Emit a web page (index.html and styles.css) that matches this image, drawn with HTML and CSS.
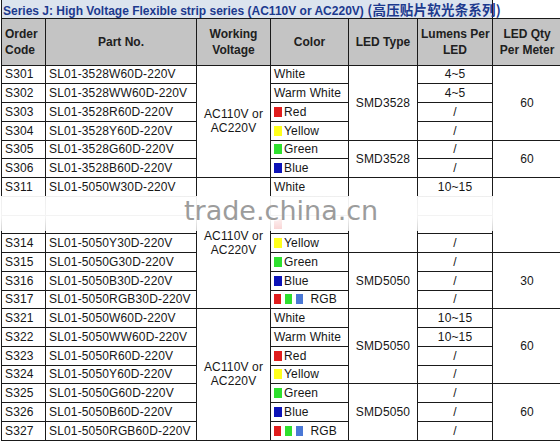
FILE: index.html
```html
<!DOCTYPE html>
<html>
<head>
<meta charset="utf-8">
<link rel="stylesheet" href="styles.css">
</head>
<body>
<div class="sheet">
<table class="spec">
  <colgroup>
    <col class="c1"><col class="c2"><col class="c3"><col class="c4"><col class="c5"><col class="c6"><col class="c7">
  </colgroup>
  <tr class="title">
    <td colspan="6" class="title-cell">Series J: High Voltage Flexible strip series (AC110V or AC220V) <span class="cjk">(高压贴片软光条系列)</span></td>
    <td class="title-blank"></td>
  </tr>
  <tr class="head">
    <th class="left">Order<br>Code</th>
    <th>Part No.</th>
    <th>Working<br>Voltage</th>
    <th>Color</th>
    <th>LED Type</th>
    <th>Lumens Per<br>LED</th>
    <th>LED Qty<br>Per Meter</th>
  </tr>

  <tr><td>S301</td><td>SL01-3528W60D-220V</td><td rowspan="6" class="ctr">AC110V or<br>AC220V</td><td>White</td><td rowspan="4" class="ctr">SMD3528</td><td class="ctr">4~5</td><td rowspan="4" class="ctr">60</td></tr>
  <tr><td>S302</td><td>SL01-3528WW60D-220V</td><td>Warm White</td><td class="ctr">4~5</td></tr>
  <tr><td>S303</td><td>SL01-3528R60D-220V</td><td><i class="sw red"></i>Red</td><td class="ctr">/</td></tr>
  <tr><td>S304</td><td>SL01-3528Y60D-220V</td><td><i class="sw yellow"></i>Yellow</td><td class="ctr">/</td></tr>
  <tr><td>S305</td><td>SL01-3528G60D-220V</td><td><i class="sw green"></i>Green</td><td rowspan="2" class="ctr">SMD3528</td><td class="ctr">/</td><td rowspan="2" class="ctr">60</td></tr>
  <tr><td>S306</td><td>SL01-3528B60D-220V</td><td><i class="sw blue"></i>Blue</td><td class="ctr">/</td></tr>

  <tr><td>S311</td><td>SL01-5050W30D-220V</td><td rowspan="7" class="ctr">AC110V or<br>AC220V</td><td>White</td><td rowspan="4" class="ctr"></td><td class="ctr">10~15</td><td rowspan="4" class="ctr"></td></tr>
  <tr><td></td><td></td><td></td><td class="ctr"></td></tr>
  <tr><td></td><td></td><td><i class="sw red"></i></td><td class="ctr"></td></tr>
  <tr><td>S314</td><td>SL01-5050Y30D-220V</td><td><i class="sw yellow"></i>Yellow</td><td class="ctr">/</td></tr>
  <tr><td>S315</td><td>SL01-5050G30D-220V</td><td><i class="sw green"></i>Green</td><td rowspan="3" class="ctr">SMD5050</td><td class="ctr">/</td><td rowspan="3" class="ctr">30</td></tr>
  <tr><td>S316</td><td>SL01-5050B30D-220V</td><td><i class="sw blue"></i>Blue</td><td class="ctr">/</td></tr>
  <tr><td>S317</td><td>SL01-5050RGB30D-220V</td><td><i class="sw red sm"></i><i class="sw green sm"></i><i class="sw lblue sm"></i> RGB</td><td class="ctr">/</td></tr>

  <tr><td>S321</td><td>SL01-5050W60D-220V</td><td rowspan="7" class="ctr">AC110V or<br>AC220V</td><td>White</td><td rowspan="4" class="ctr">SMD5050</td><td class="ctr">10~15</td><td rowspan="4" class="ctr">60</td></tr>
  <tr><td>S322</td><td>SL01-5050WW60D-220V</td><td>Warm White</td><td class="ctr">10~15</td></tr>
  <tr><td>S323</td><td>SL01-5050R60D-220V</td><td><i class="sw red"></i>Red</td><td class="ctr">/</td></tr>
  <tr><td>S324</td><td>SL01-5050Y60D-220V</td><td><i class="sw yellow"></i>Yellow</td><td class="ctr">/</td></tr>
  <tr><td>S325</td><td>SL01-5050G60D-220V</td><td><i class="sw green"></i>Green</td><td rowspan="3" class="ctr">SMD5050</td><td class="ctr">/</td><td rowspan="3" class="ctr">60</td></tr>
  <tr><td>S326</td><td>SL01-5050B60D-220V</td><td><i class="sw blue"></i>Blue</td><td class="ctr">/</td></tr>
  <tr><td>S327</td><td>SL01-5050RGB60D-220V</td><td><i class="sw red sm"></i><i class="sw green sm"></i><i class="sw lblue sm"></i> RGB</td><td class="ctr">/</td></tr>
</table>
<div class="watermark"><span class="wm-text">trade.china.cn</span></div>
</div>
</body>
</html>
```

FILE: styles.css
```css
html, body {
  margin: 0;
  padding: 0;
  background: #ffffff;
  overflow: hidden;
}
.sheet {
  position: relative;
  width: 560px;
  height: 442px;
  overflow: hidden;
}
.spec {
  border-collapse: collapse;
  table-layout: fixed;
  width: 560px;
  margin-left: 1px;
  font-family: "Liberation Sans", Arial, sans-serif;
  font-size: 12px;
  letter-spacing: 0.15px;
  color: #161616;
}
.c1 { width: 44px; }
.c2 { width: 151px; }
.c3 { width: 74px; }
.c4 { width: 78px; }
.c5 { width: 69px; }
.c6 { width: 75px; }
.c7 { width: 69px; }

.spec td, .spec th {
  border: 1px solid #1a1a1a;
  padding: 0 3px;
  line-height: 14px;
  white-space: nowrap;
  overflow: hidden;
  vertical-align: middle;
}
.spec tr { height: 18.75px; }
.spec td.ctr { text-align: center; }

.title { height: 17.5px !important; }
.title-cell {
  border-top: none !important;
  background: #dce4ee;
  color: #1c3a8e;
  font-weight: bold;
  letter-spacing: 0;
  padding: 2px 0 0 1px !important;
  line-height: 14px !important;
  overflow: visible !important;
}
.title-blank {
  border-top: none !important;
  border-right: none !important;
  background: #ffffff;
}
.cjk {
  font-family: "Noto Sans CJK SC", "Liberation Sans", sans-serif;
  font-size: 13.5px;
  letter-spacing: 0.2px;
}

.head { height: 46.5px !important; }
.head th {
  background: #c4c4c4;
  color: #202020;
  font-weight: bold;
  font-size: 12px;
  letter-spacing: 0;
  line-height: 16px;
  text-align: center;
}
.head th.left { text-align: left; padding-left: 3px; }

.sw {
  display: inline-block;
  width: 8px;
  height: 10px;
  vertical-align: -1px;
  margin-right: 2px;
}
.sw.sm { width: 7px; margin-right: 4px; }
.red { background: #e01c1c; }
.yellow { background: #ffff1a; }
.green { background: #2ee02e; }
.blue { background: #0c12b8; }
.lblue { background: #4a78d6; }

.watermark {
  position: absolute;
  left: 0;
  right: 0;
  top: 196px;
  height: 35px;
  background: linear-gradient(to bottom, rgba(255,255,255,0.93) 0%, rgba(255,255,255,0.95) 60%, rgba(255,255,255,0.8) 100%);
}
.wm-text {
  position: absolute;
  left: 184px;
  top: 2px;
  font-family: "DejaVu Sans", sans-serif;
  font-size: 27px;
  line-height: 26px;
  color: #9c9c9c;
  text-shadow: 1px 1px 1px rgba(255,255,255,0.8);
}
```
